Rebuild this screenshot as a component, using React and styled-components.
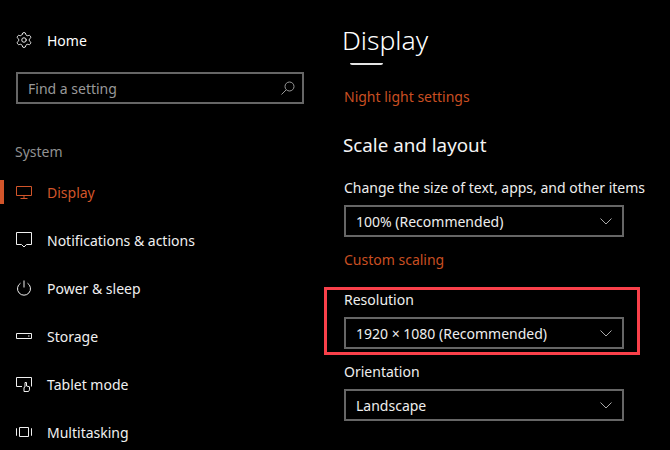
import styled, { createGlobalStyle } from "styled-components"
import { Settings } from "lucide-react"

const Global = createGlobalStyle`
  html, body {
    margin: 0;
    background: #000;
  }
  body {
    font-family: "Noto Sans", "Open Sans", sans-serif;
  }
`

const Page = styled.div`
  width: 670px;
  height: 450px;
  overflow: hidden;
  background: #000;
  display: grid;
  grid-template-columns: 344px 1fr;
`
const Sidebar = styled.nav`
  display: flex;
  flex-direction: column;
  padding-top: 16px;
`
const HomeRow = styled.div`
  height: 48px;
  display: flex;
  align-items: center;
  padding-left: 15px;
  gap: 14px;
  color: #fff;
  font-size: 14px;
`
const SearchBox = styled.div`
  box-sizing: border-box;
  width: 288px;
  height: 32px;
  margin: 8px 0 0 16px;
  border: 2px solid #666;
  display: flex;
  align-items: center;
  justify-content: space-between;
  padding: 0 6px 0 10px;
  color: #999;
  font-size: 14px;
`
const SectionLabel = styled.div`
  margin: 38px 0 0 15px;
  height: 20px;
  line-height: 20px;
  color: #919191;
  font-size: 14px;
`
const NavList = styled.div`
  margin-top: 6px;
  display: flex;
  flex-direction: column;
`
const NavRow = styled.div`
  position: relative;
  height: 48px;
  flex: none;
  display: flex;
  align-items: center;
  gap: 15px;
  padding-left: 16px;
  font-size: 14px;
  color: ${(p) => (p.$active ? "#d2552a" : "#f0f0f0")};

  &::before {
    content: "";
    display: ${(p) => (p.$active ? "block" : "none")};
    position: absolute;
    left: 0;
    top: 12px;
    width: 4px;
    height: 24px;
    background: #d2552a;
  }
`
const IconBox = styled.svg`
  width: 16px;
  height: 16px;
  flex: none;
  fill: none;
  stroke: currentColor;
  stroke-width: 1;
`
const Main = styled.main`
  display: flex;
  flex-direction: column;
  align-items: flex-start;
  color: #f0f0f0;
`
const Title = styled.h1`
  margin: 18px 0 0 -2px;
  height: 44px;
  line-height: 44px;
  font-size: 26.5px;
  font-weight: 300;
  color: #fff;
`
const ThumbLine = styled.div`
  width: 33px;
  height: 2px;
  margin: 1px 0 0 6px;
  background: #e4e4e4;
  border-radius: 0 0 8px 8px;
`
const LinkText = styled.a`
  display: block;
  height: 20px;
  line-height: 20px;
  margin-top: ${(p) => p.$top}px;
  color: #c94f22;
  font-size: 14px;
`
const Heading = styled.h2`
  margin: 24px 0 0 -1px;
  height: 28px;
  line-height: 28px;
  font-size: 18.8px;
  font-weight: 400;
  color: #f4f4f4;
`
const Field = styled.div`
  position: relative;
  margin-top: ${(p) => p.$top}px;
`
const FieldLabel = styled.div`
  height: 20px;
  line-height: 20px;
  font-size: 14px;
  color: #eee;
`
const Select = styled.div`
  box-sizing: border-box;
  width: 280px;
  height: 32px;
  margin-top: 7px;
  border: 2px solid #666;
  display: flex;
  align-items: center;
  justify-content: space-between;
  padding: 0 10px;
  font-size: 14px;
  color: #eee;
`
const Highlight = styled.div`
  position: absolute;
  left: -20px;
  top: -3px;
  width: 316px;
  height: 68px;
  box-sizing: border-box;
  border: 3px solid #f9404a;
  pointer-events: none;
`

const Gear = () => <Settings size={18} strokeWidth={1.2} color="#fff" style={{ flex: "none" }} />

const SearchIcon = () => (
  <IconBox viewBox="0 0 16 16" style={{ color: "#999" }}>
    <circle cx="9.5" cy="6.5" r="4.5" />
    <path d="M6.3 9.7 1.5 14.5" />
  </IconBox>
)

const Chevron = () => (
  <svg width="12" height="7" viewBox="0 0 12 7" fill="none" stroke="#aaa" strokeWidth="1">
    <path d="M.5.5 6 6l5.5-5.5" />
  </svg>
)

const MonitorIcon = () => (
  <IconBox viewBox="0 0 16 16">
    <path d="M.5 2.5h15v9H.5zM8 11.5v3M4.5 14.5h7" />
  </IconBox>
)
const NoteIcon = () => (
  <IconBox viewBox="0 0 16 16">
    <path d="M.5 .5h15v12h-5L8 15l-2.5-2.5h-5z" />
  </IconBox>
)
const PowerIcon = () => (
  <IconBox viewBox="0 0 16 16">
    <path d="M8 .5v7M4.5 3.2a6.5 6.5 0 1 0 7 0" />
  </IconBox>
)
const StorageIcon = () => (
  <IconBox viewBox="0 0 16 16">
    <path d="M.5 5.5h15v5H.5zM12 8h1.5" />
  </IconBox>
)
const TabletIcon = () => (
  <IconBox viewBox="0 0 16 16">
    <path d="M6 10.5H.5v-9h15v9" />
    <path d="M8 15.5v-4l1-.5V6.5h1.500V10l3 .8v3l-1 1.700z" />
  </IconBox>
)
const MultiIcon = () => (
  <IconBox viewBox="0 0 16 16">
    <path d="M3.5 3.5h9v9h-9zM1 4.5H.5v7H1M15 4.5h.5v7H15" />
  </IconBox>
)

const navItems = [
  { name: "Display", icon: MonitorIcon, active: true },
  { name: "Notifications & actions", icon: NoteIcon },
  { name: "Power & sleep", icon: PowerIcon },
  { name: "Storage", icon: StorageIcon },
  { name: "Tablet mode", icon: TabletIcon },
  { name: "Multitasking", icon: MultiIcon },
]

export default function App() {
  return (
    <Page>
      <Global />
      <Sidebar>
        <HomeRow>
          <Gear />
          <span>Home</span>
        </HomeRow>
        <SearchBox>
          <span>Find a setting</span>
          <SearchIcon />
        </SearchBox>
        <SectionLabel>System</SectionLabel>
        <NavList>
          {navItems.map((el) => (
            <NavRow key={el.name} $active={el.active}>
              <el.icon />
              <span>{el.name}</span>
            </NavRow>
          ))}
        </NavList>
      </Sidebar>
      <Main>
        <Title>Display</Title>
        <ThumbLine />
        <LinkText $top={22}>Night light settings</LinkText>
        <Heading>Scale and layout</Heading>
        <Field $top={19}>
          <FieldLabel>Change the size of text, apps, and other items</FieldLabel>
          <Select>
            <span>100% (Recommended)</span>
            <Chevron />
          </Select>
        </Field>
        <LinkText $top={13}>Custom scaling</LinkText>
        <Field $top={20}>
          <FieldLabel>Resolution</FieldLabel>
          <Select>
            <span>1920 × 1080 (Recommended)</span>
            <Chevron />
          </Select>
          <Highlight />
        </Field>
        <Field $top={13}>
          <FieldLabel>Orientation</FieldLabel>
          <Select>
            <span>Landscape</span>
            <Chevron />
          </Select>
        </Field>
      </Main>
    </Page>
  )
}
